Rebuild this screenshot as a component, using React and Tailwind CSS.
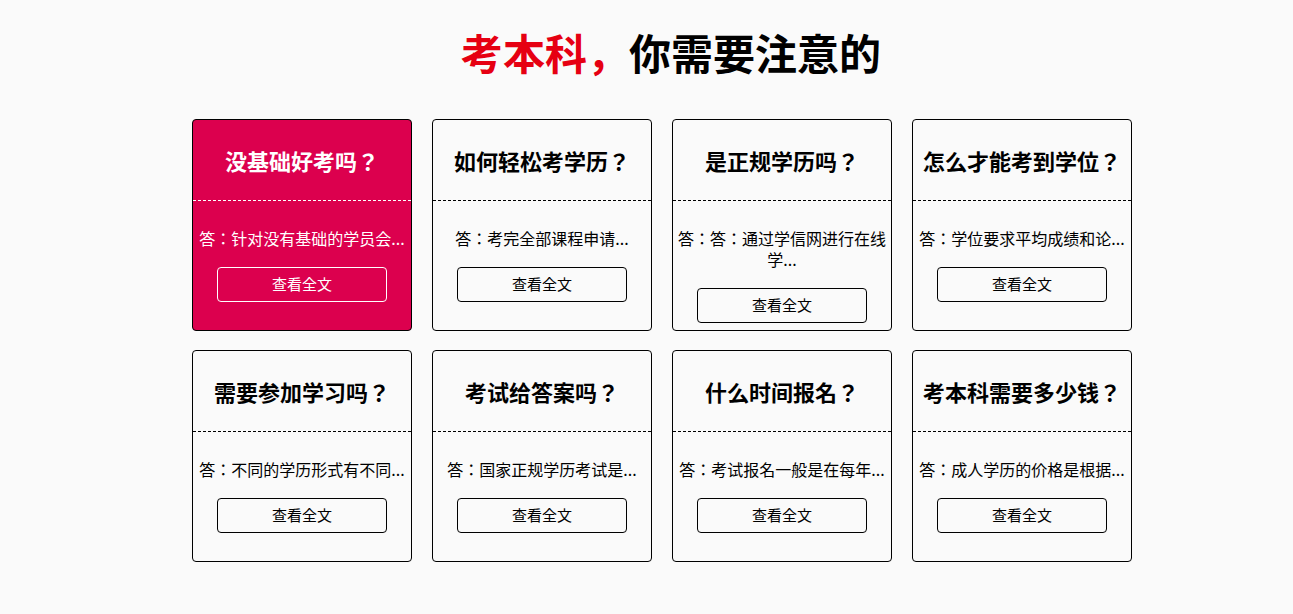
import React from 'react';

const items = [
  { q: '没基础好考吗？', a: '答：针对没有基础的学员会...', active: true },
  { q: '如何轻松考学历？', a: '答：考完全部课程申请...' },
  { q: '是正规学历吗？', a: '答：答：通过学信网进行在线学...' },
  { q: '怎么才能考到学位？', a: '答：学位要求平均成绩和论...' },
  { q: '需要参加学习吗？', a: '答：不同的学历形式有不同...' },
  { q: '考试给答案吗？', a: '答：国家正规学历考试是...' },
  { q: '什么时间报名？', a: '答：考试报名一般是在每年...' },
  { q: '考本科需要多少钱？', a: '答：成人学历的价格是根据...' },
];

const Card = ({ q, a, active }) => (
  <div
    className={`w-[220px] h-[212px] border border-black rounded-[4px] flex flex-col ${
      active ? 'bg-[#dc004e] text-white' : 'bg-[#fafafa] text-black'
    }`}
  >
    <div
      className={`h-[81px] shrink-0 flex items-center justify-center border-b border-dashed ${
        active ? 'border-white' : 'border-black'
      }`}
    >
      <h3 className="text-[22px] font-bold leading-none">{q}</h3>
    </div>
    <div className="flex flex-col items-center pt-[27px] px-1">
      <p className="text-[16px] leading-[21px] text-center">{a}</p>
      <button
        className={`mt-[18px] w-[170px] h-[35px] rounded-[4px] border text-[15px] ${
          active ? 'border-white text-white' : 'border-black text-black'
        }`}
      >
        查看全文
      </button>
    </div>
  </div>
);

const App = () => {
  return (
    <div
      className="min-h-screen bg-[#fafafa] flex flex-col items-center pl-[31px]"
      style={{ fontFamily: '"Noto Sans CJK JP", "Noto Sans CJK SC", "Noto Sans", sans-serif' }}
    >
      <h1 className="mt-[29px] pl-[18px] text-[42px] font-bold leading-[46px] tracking-normal">
        <span className="text-[#e60012]">考本科，</span>
        <span className="text-black">你需要注意的</span>
      </h1>
      <div className="mt-[44px] grid grid-cols-4 gap-x-[20px] gap-y-[19px]">
        {items.map((it) => (
          <Card key={it.q} {...it} />
        ))}
      </div>
    </div>
  );
};

export default App;
